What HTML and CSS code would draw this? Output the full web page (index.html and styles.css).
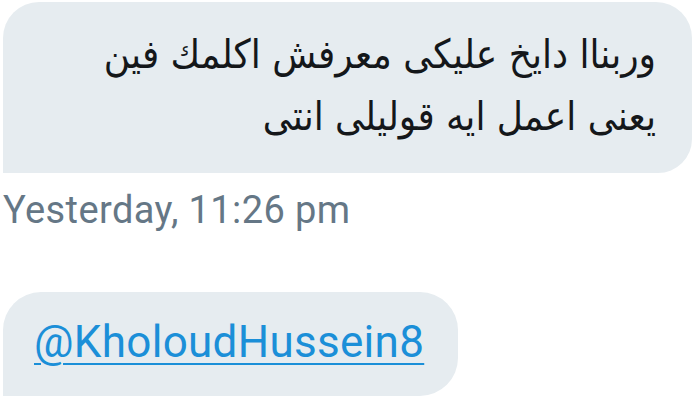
FILE: index.html
```html
<!DOCTYPE html>
<html lang="ar">
<head>
    <meta charset="UTF-8">
    <meta name="viewport" content="width=device-width, initial-scale=1.0">
    <title>Messages</title>
    <link rel="stylesheet" href="styles.css">
</head>
<body>
    <div class="thread">
        <div class="bubble bubble-text" dir="rtl">
            <p class="message-text">وربناا دايخ عليكى معرفش اكلمك فين<br>يعنى اعمل ايه قوليلى انتى</p>
        </div>
        <p class="timestamp" dir="ltr">Yesterday, 11:26 pm</p>
        <div class="bubble bubble-link" dir="ltr">
            <a class="mention" href="#">@KholoudHussein8</a>
        </div>
    </div>
</body>
</html>
```

FILE: styles.css
```css
body {
    margin: 0;
    background: #ffffff;
    font-family: Roboto, "Open Sans", sans-serif;
    overflow: hidden;
}

.thread {
    display: flex;
    flex-direction: column;
    align-items: flex-start;
    padding: 2px 0 0 3px;
}

.bubble {
    background-color: #e6ecf0;
    box-sizing: border-box;
}

.bubble-text {
    width: 689px;
    height: 171px;
    border-radius: 36px 36px 34px 0;
    padding: 21px 36px 0 20px;
}

.message-text {
    margin: 0;
    font-family: "DejaVu Sans Condensed", "DejaVu Sans", sans-serif;
    font-size: 40px;
    line-height: 62px;
    color: #14171a;
    text-align: right;
}

.timestamp {
    margin: 13px 0 0 0;
    font-size: 38px;
    line-height: 48px;
    letter-spacing: 0.4px;
    color: #657786;
}

.bubble-link {
    margin-top: 58px;
    width: 455px;
    height: 104px;
    border-radius: 38px 38px 38px 0;
    padding: 22px 0 0 31px;
}

.mention {
    font-size: 44px;
    line-height: 56px;
    letter-spacing: 0.3px;
    color: #1b8fd8;
    text-decoration: underline;
    text-decoration-thickness: 2px;
    text-underline-offset: 6px;
}
```
